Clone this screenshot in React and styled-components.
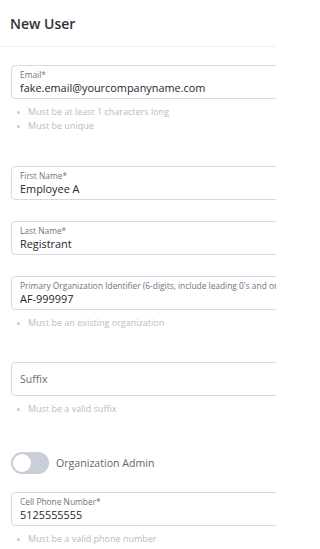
import React from 'react'
import styled, { createGlobalStyle } from 'styled-components'

const GlobalStyle = createGlobalStyle`
  html, body {
    margin: 0;
    padding: 0;
    background: #ffffff;
    font-family: 'Open Sans', 'Noto Sans', Arial, sans-serif;
    overflow: hidden;
  }
`

// fields drawn as outlined boxes, gap = space above each group
const fields = [
  {
    label: 'Email*',
    value: 'fake.email@yourcompanyname.com',
    hints: ['Must be at least 1 characters long', 'Must be unique'],
    gap: 18,
  },
  { label: 'First Name*', value: 'Employee A', gap: 33 },
  { label: 'Last Name*', value: 'Registrant', gap: 21 },
  {
    label: "Primary Organization Identifier (6-digits, include leading 0's and omit AF-)",
    value: 'AF-999997',
    hints: ['Must be an existing organization'],
    gap: 21,
  },
  { placeholder: 'Suffix', hints: ['Must be a valid suffix'], gap: 32 },
]

const NewUser = () => {
  return (
    <Page>
      <GlobalStyle />
      <Header>
        <Title>New User</Title>
      </Header>
      <Form>
        {fields.map(field => (
          <FieldGroup key={field.label || field.placeholder} gap={field.gap}>
            <FieldBox>
              {field.placeholder ? (
                <Placeholder>{field.placeholder}</Placeholder>
              ) : (
                <>
                  <FieldLabel>{field.label}</FieldLabel>
                  <FieldValue>{field.value}</FieldValue>
                </>
              )}
            </FieldBox>
            {field.hints && (
              <HintList>
                {field.hints.map(hint => (
                  <Hint key={hint}>{hint}</Hint>
                ))}
              </HintList>
            )}
          </FieldGroup>
        ))}
        <ToggleRow>
          <Toggle>
            <Knob />
          </Toggle>
          <ToggleLabel>Organization Admin</ToggleLabel>
        </ToggleRow>
        <FieldGroup gap={18}>
          <FieldBox>
            <FieldLabel>Cell Phone Number*</FieldLabel>
            <FieldValue>5125555555</FieldValue>
          </FieldBox>
          <HintList>
            <Hint>Must be a valid phone number</Hint>
          </HintList>
        </FieldGroup>
      </Form>
    </Page>
  )
}

const Page = styled.div`
  width: 276px;
  height: 549px;
  overflow: hidden;
  background: #ffffff;
`
const Header = styled.div`
  height: 46px;
  display: flex;
  align-items: center;
  padding-left: 10px;
  border-bottom: 1px solid #eef0f3;
`
const Title = styled.h1`
  margin: 0;
  font-size: 14px;
  font-weight: 600;
  color: #2e3238;
`
const Form = styled.div`
  display: flex;
  flex-direction: column;
  padding-left: 11px;
`
const FieldGroup = styled.div`
  margin-top: ${props => props.gap}px;
  width: 320px;
`
const FieldBox = styled.div`
  box-sizing: border-box;
  height: 34px;
  border: 1px solid #d6dbe3;
  border-radius: 4px;
  padding: 3px 8px 0;
  display: flex;
  flex-direction: column;
`
const FieldLabel = styled.div`
  font-size: 8.4px;
  line-height: 11px;
  color: #6c7480;
  white-space: nowrap;
`
const FieldValue = styled.div`
  font-size: 10.9px;
  line-height: 15px;
  color: #23272d;
  white-space: nowrap;
`
const Placeholder = styled.div`
  font-size: 10.5px;
  line-height: 27px;
  color: #666d78;
`
const HintList = styled.ul`
  margin: 6px 0 0;
  padding: 0 0 0 17px;
  list-style: none;
`
const Hint = styled.li`
  position: relative;
  font-size: 9px;
  line-height: 14px;
  color: #b7bcc5;
  white-space: nowrap;
  &::before {
    content: '';
    position: absolute;
    left: -11px;
    top: 6px;
    width: 3px;
    height: 3px;
    border-radius: 50%;
    background: #c6cbd2;
  }
`
const ToggleRow = styled.div`
  margin-top: 36px;
  display: flex;
  align-items: center;
  gap: 7px;
`
const Toggle = styled.div`
  box-sizing: border-box;
  width: 38px;
  height: 22px;
  border-radius: 11px;
  background: #c9ced8;
  padding: 2px;
  display: flex;
  align-items: center;
`
const Knob = styled.div`
  width: 18px;
  height: 18px;
  border-radius: 50%;
  background: #ffffff;
`
const ToggleLabel = styled.span`
  font-size: 10.6px;
  color: #5f6670;
`

export default NewUser
